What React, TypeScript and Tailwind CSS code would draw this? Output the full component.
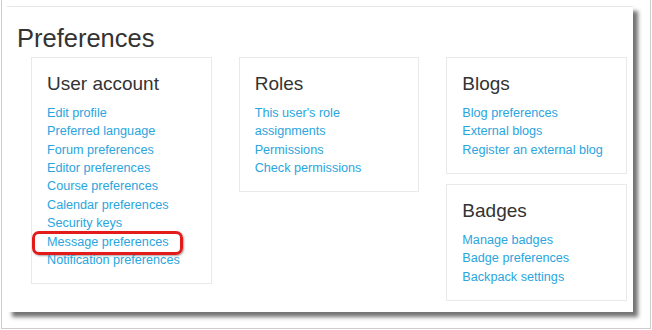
import React from 'react'

type Section = {
  title: string
  links: string[]
}

const userAccount: Section = {
  title: 'User account',
  links: [
    'Edit profile',
    'Preferred language',
    'Forum preferences',
    'Editor preferences',
    'Course preferences',
    'Calendar preferences',
    'Security keys',
    'Message preferences',
    'Notification preferences',
  ],
}

const roles: Section = {
  title: 'Roles',
  links: ["This user's role assignments", 'Permissions', 'Check permissions'],
}

const blogs: Section = {
  title: 'Blogs',
  links: ['Blog preferences', 'External blogs', 'Register an external blog'],
}

const badges: Section = {
  title: 'Badges',
  links: ['Manage badges', 'Badge preferences', 'Backpack settings'],
}

function Card({ section, highlight }: { section: Section; highlight?: string }) {
  return (
    <div className="border border-[#e9e9e9] bg-white px-[15px] pt-[15px] pb-[14px]">
      <h3 className="text-[19px] leading-[22.8px] text-[#333] font-normal">
        {section.title}
      </h3>
      <ul className="mt-[8px] text-[12.65px] leading-[18.4px]">
        {section.links.map((link) => (
          <li key={link} className="relative">
            <a href="#" className="text-[#2aa5de]">
              {link}
            </a>
            {link === highlight && (
              <span className="absolute left-[-15px] top-[-2px] h-[24px] w-[151px] rounded-[7px] border-[3px] border-[#e31b1b] shadow-[1px_1px_2px_rgba(0,0,0,0.35)]" />
            )}
          </li>
        ))}
      </ul>
    </div>
  )
}

export default function App() {
  return (
    <div
      className="flex h-[330px] w-[652px] bg-white pl-[1px] pr-[1px] pb-[1px]"
      style={{ fontFamily: '"Liberation Sans", Arial, sans-serif' }}
    >
      <div className="flex-1 border-l border-r border-b border-[#cdcdcd]">
        <div className="mt-[6px] ml-[5px] h-[306px] w-[626px] border-t border-[#e6e6e6] bg-white shadow-[5px_5px_4px_rgba(0,0,0,0.55)]">
          <div className="pl-[10px] pt-[15.5px]">
            <h2 className="text-[25.5px] leading-[30px] text-[#333] font-normal">
              Preferences
            </h2>
          </div>
          <div className="mt-[4.5px] ml-[24px] grid w-[596px] grid-cols-3 items-start gap-x-[27px]">
            <Card section={userAccount} highlight="Message preferences" />
            <Card section={roles} />
            <div className="flex flex-col gap-[10px]">
              <Card section={blogs} />
              <Card section={badges} />
            </div>
          </div>
        </div>
      </div>
    </div>
  )
}
